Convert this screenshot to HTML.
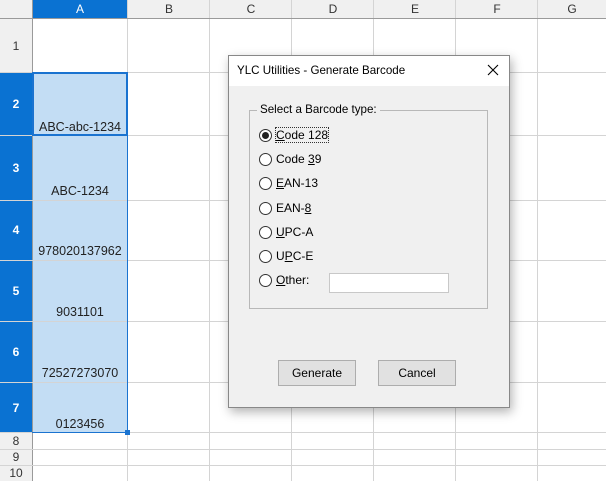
<!DOCTYPE html>
<html><head><style>
*{margin:0;padding:0;box-sizing:border-box}
body{width:606px;height:481px;overflow:hidden;background:#fff;font-family:"Liberation Sans",sans-serif;position:relative}
.a{position:absolute}
.hl{position:absolute;height:1px;background:#d4d4d4}
.vl{position:absolute;width:1px;background:#d4d4d4}
.ch{position:absolute;top:0;height:18px;font-size:12px;color:#333;text-align:center;line-height:18px}
.rh{position:absolute;left:0;width:32px;font-size:12px;color:#333;text-align:center}
.cell{position:absolute;left:32px;width:96px;text-align:center;font-size:12.5px;color:#222}
.dlg{font-family:"Liberation Sans",sans-serif;font-size:12px;color:#000}
.rad{position:absolute;left:259px;width:13px;height:13px;border:1px solid #333;border-radius:50%;background:#fff}
.lab{position:absolute;left:276px;font-size:12px}
u{text-decoration:underline}
.btn{position:absolute;top:360px;height:26px;width:78px;background:#e1e1e1;border:1px solid #adadad;text-align:center;line-height:24px;font-size:12px}
</style></head><body>
<div class="a" style="left:0;top:0;width:606px;height:18px;background:#f0f0f0"></div>
<div class="a" style="left:0;top:18px;width:32px;height:463px;background:#f0f0f0"></div>
<div class="a" style="left:32px;top:0;width:96px;height:18px;background:#0a72d2"></div>
<div class="a" style="left:0;top:72px;width:32px;height:360px;background:#0a72d2"></div>
<div class="a" style="left:32px;top:72px;width:96px;height:360px;background:#c3ddf4"></div>
<div class="vl" style="left:127px;top:0;height:481px"></div>
<div class="vl" style="left:209px;top:0;height:481px"></div>
<div class="vl" style="left:291px;top:0;height:481px"></div>
<div class="vl" style="left:373px;top:0;height:481px"></div>
<div class="vl" style="left:455px;top:0;height:481px"></div>
<div class="vl" style="left:537px;top:0;height:481px"></div>
<div class="a" style="left:32px;top:0;width:1px;height:481px;background:#9a9a9a"></div>
<div class="a" style="left:0;top:18px;width:606px;height:1px;background:#9a9a9a"></div>
<div class="hl" style="left:0;top:72px;width:606px"></div>
<div class="hl" style="left:0;top:135px;width:606px"></div>
<div class="hl" style="left:0;top:200px;width:606px"></div>
<div class="hl" style="left:0;top:260px;width:606px"></div>
<div class="hl" style="left:0;top:321px;width:606px"></div>
<div class="hl" style="left:0;top:382px;width:606px"></div>
<div class="hl" style="left:0;top:432px;width:606px"></div>
<div class="hl" style="left:0;top:449px;width:606px"></div>
<div class="hl" style="left:0;top:465px;width:606px"></div>
<div class="ch" style="left:32px;width:96px;color:#fff">A</div>
<div class="ch" style="left:128px;width:82px">B</div>
<div class="ch" style="left:210px;width:82px">C</div>
<div class="ch" style="left:292px;width:82px">D</div>
<div class="ch" style="left:374px;width:82px">E</div>
<div class="ch" style="left:456px;width:82px">F</div>
<div class="ch" style="left:538px;width:68px">G</div>
<div class="rh" style="top:39px">1</div>
<div class="rh" style="top:97px;color:#fff;font-weight:bold">2</div>
<div class="rh" style="top:161px;color:#fff;font-weight:bold">3</div>
<div class="rh" style="top:223px;color:#fff;font-weight:bold">4</div>
<div class="rh" style="top:284px;color:#fff;font-weight:bold">5</div>
<div class="rh" style="top:345px;color:#fff;font-weight:bold">6</div>
<div class="rh" style="top:401px;color:#fff;font-weight:bold">7</div>
<div class="rh" style="top:434px">8</div>
<div class="rh" style="top:450px">9</div>
<div class="rh" style="top:466px">10</div>
<div class="a" style="left:32px;top:72px;width:96px;height:64px;border:2px solid #1a73d0"></div>
<div class="cell" style="top:120px">ABC-abc-1234</div>
<div class="cell" style="top:184px">ABC-1234</div>
<div class="cell" style="top:244px">978020137962</div>
<div class="cell" style="top:305px">9031101</div>
<div class="cell" style="top:366px">72527273070</div>
<div class="cell" style="top:417px">0123456</div>
<div class="a" style="left:32px;top:432px;width:96px;height:1px;background:#1a73d0"></div>
<div class="a" style="left:127px;top:72px;width:1px;height:360px;background:#1a73d0"></div>
<div class="a" style="left:125px;top:430px;width:5px;height:5px;background:#1a73d0"></div>
<div class="a dlg" style="left:228px;top:55px;width:282px;height:353px;background:#f0f0f0;border:1px solid #888;box-shadow:2px 4px 10px rgba(0,0,0,0.3)">
<div class="a" style="left:0;top:0;width:280px;height:30px;background:#fff"></div>
<div class="a" style="left:8px;top:8px;font-size:11.6px">YLC Utilities - Generate Barcode</div>
<svg class="a" style="left:258px;top:8px" width="12" height="12"><path d="M1 1L11 11M11 1L1 11" stroke="#000" stroke-width="1.1"/></svg>
</div>
<div class="a" style="left:249px;top:110px;width:239px;height:199px;border:1px solid #b8b8b8"></div>
<div class="a dlg" style="left:257px;top:103px;background:#f0f0f0;padding:0 3px;font-size:11.6px">Select a Barcode type:</div>
<div class="rad" style="top:129px"></div><div class="a" style="left:262px;top:132px;width:7px;height:7px;border-radius:50%;background:#222"></div>
<div class="lab dlg" style="top:128px;outline:1px dotted #333"><u>C</u>ode 128</div>
<div class="rad" style="top:153px"></div><div class="lab dlg" style="top:152px">Code <u>3</u>9</div>
<div class="rad" style="top:177px"></div><div class="lab dlg" style="top:176px"><u>E</u>AN-13</div>
<div class="rad" style="top:202px"></div><div class="lab dlg" style="top:201px">EAN-<u>8</u></div>
<div class="rad" style="top:226px"></div><div class="lab dlg" style="top:225px"><u>U</u>PC-A</div>
<div class="rad" style="top:250px"></div><div class="lab dlg" style="top:249px">U<u>P</u>C-E</div>
<div class="rad" style="top:274px"></div><div class="lab dlg" style="top:273px"><u>O</u>ther:</div>
<div class="a" style="left:329px;top:273px;width:120px;height:20px;background:#fff;border:1px solid #c8c8c8"></div>
<div class="btn dlg" style="left:278px">Generate</div>
<div class="btn dlg" style="left:378px">Cancel</div>
</body></html>
